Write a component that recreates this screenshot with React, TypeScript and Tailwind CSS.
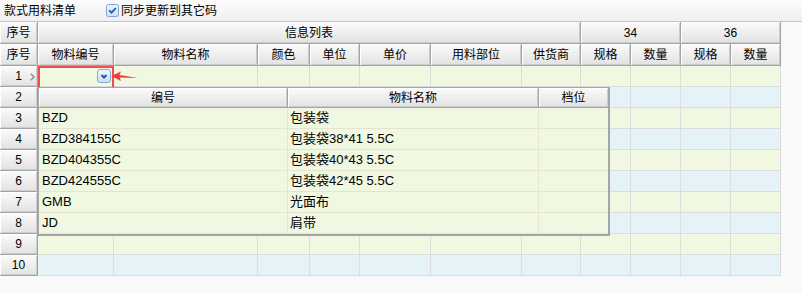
const COLS =
  "grid grid-cols-[38px_76px_144px_52px_50px_71px_91px_59px_50px_50px_50px_50px]";
const FONT = "font-['Liberation_Sans','Noto_Sans_CJK_SC',sans-serif]";

const subHeads = ["物料编号", "物料名称", "颜色", "单位", "单价", "用料部位", "供货商", "规格", "数量", "规格", "数量"];

const items = [
  { code: "BZD", name: "包装袋" },
  { code: "BZD384155C", name: "包装袋38*41 5.5C" },
  { code: "BZD404355C", name: "包装袋40*43 5.5C" },
  { code: "BZD424555C", name: "包装袋42*45 5.5C" },
  { code: "GMB", name: "光面布" },
  { code: "JD", name: "肩带" },
];

function Head({ children, className = "" }: { children?: React.ReactNode; className?: string }) {
  return (
    <div
      className={`flex items-center justify-center border-r border-b border-[#a3a3a3] bg-linear-to-b from-[#fbfbfb] to-[#e2e2e2] text-[12px] text-black shadow-[inset_1px_1px_0_#ffffff,inset_-1px_-1px_0_#cdcdcd] ${className}`}
    >
      {children}
    </div>
  );
}

function DropButton() {
  return (
    <svg width="14" height="14" viewBox="0 0 14 14">
      <defs>
        <linearGradient id="db" x1="0" y1="0" x2="0" y2="1">
          <stop offset="0" stopColor="#f2f8fe" />
          <stop offset="1" stopColor="#c9ddf4" />
        </linearGradient>
      </defs>
      <rect x="0.5" y="0.5" width="13" height="13" rx="2.5" fill="url(#db)" stroke="#88aad6" />
      <path d="M4.5 6 L7 8.5 L9.5 6" fill="none" stroke="#1d57a6" strokeWidth="2" />
    </svg>
  );
}

function CheckBox() {
  return (
    <svg width="13" height="13" viewBox="0 0 13 13">
      <defs>
        <linearGradient id="cb" x1="0" y1="0" x2="0" y2="1">
          <stop offset="0" stopColor="#eef5fd" />
          <stop offset="1" stopColor="#cfe1f6" />
        </linearGradient>
      </defs>
      <rect x="0.5" y="0.5" width="12" height="12" rx="2" fill="url(#cb)" stroke="#7fa5d4" />
      <path d="M3.3 6.3 L5.5 8.6 L9.8 4.2" fill="none" stroke="#1f5cab" strokeWidth="1.8" />
    </svg>
  );
}

export default function App() {
  const rows = Array.from({ length: 10 }, (_, i) => i + 1);

  return (
    <div className={`h-[293px] w-[802px] overflow-hidden bg-[#f9f9f9] text-black ${FONT}`}>
      {/* toolbar */}
      <div className="flex h-[22px] items-center border-b border-[#c4c4c4] bg-linear-to-b from-[#fcfcfc] to-[#efefef] pl-[4px] text-[12px]">
        <span>款式用料清单</span>
        <span className="ml-[30px] flex items-center gap-[2px]">
          <CheckBox />
          <span>同步更新到其它码</span>
        </span>
      </div>

      <div className="relative w-[781px]">
        {/* header rows */}
        <div className={COLS}>
          <Head className="h-[22px]">序号</Head>
          <Head className="col-span-7 h-[22px]">信息列表</Head>
          <Head className="col-span-2 h-[22px]">34</Head>
          <Head className="col-span-2 h-[22px]">36</Head>
          <Head className="h-[22px]">序号</Head>
          {subHeads.map((h, i) => (
            <Head key={i} className="h-[22px]">
              {h}
            </Head>
          ))}
        </div>

        {/* data rows */}
        {rows.map((r) => (
          <div
            key={r}
            className={`${COLS} h-[21px] ${r % 2 === 1 ? "bg-[#f0f8e1]" : "bg-[#e5f3f9]"}`}
          >
            <Head className="relative h-[21px]">
              {r}
              {r === 1 && (
                <svg className="absolute right-[2px] top-[7px]" width="5" height="8" viewBox="0 0 5 8">
                  <path d="M0.8 0.8 L4 4 L0.8 7.2" fill="none" stroke="#8a8a8a" strokeWidth="1.4" />
                </svg>
              )}
            </Head>
            {subHeads.map((_, c) => (
              <div
                key={c}
                className="flex items-center justify-end border-r border-b border-[#dcdcdc] pr-[2px]"
              >
                {r === 1 && c === 0 && <DropButton />}
              </div>
            ))}
          </div>
        ))}

        {/* editor highlight */}
        <div className="pointer-events-none absolute left-[38px] top-[44px] h-[23px] w-[76px] border-2 border-[#f34c4c]" />
        <svg className="absolute left-[110px] top-[49px]" width="30" height="12" viewBox="0 0 30 12">
          <polygon points="1,5 11,0.5 9.5,4 28,7 9.5,6.6 11,10" fill="#f03b3b" />
        </svg>

        {/* lookup popup */}
        <div className="absolute left-[38px] top-[65px] w-[572px] border-t border-l border-r-2 border-b-2 border-[#a5a5a5] bg-[#f0f8e1] text-[13px]">
          <div className="grid grid-cols-[249px_251px_69px]">
            <Head className="h-[20px]">编号</Head>
            <Head className="h-[20px]">物料名称</Head>
            <Head className="h-[20px] border-r-0">档位</Head>
          </div>
          {items.map((it) => (
            <div key={it.code} className="grid h-[21px] grid-cols-[249px_251px_69px]">
              <div className="flex items-center border-r border-b border-[#e6e3cf] pl-[3px]">{it.code}</div>
              <div className="flex items-center border-r border-b border-[#e6e3cf] pl-[2px]">{it.name}</div>
              <div className="border-b border-[#e6e3cf]" />
            </div>
          ))}
        </div>
      </div>
    </div>
  );
}
